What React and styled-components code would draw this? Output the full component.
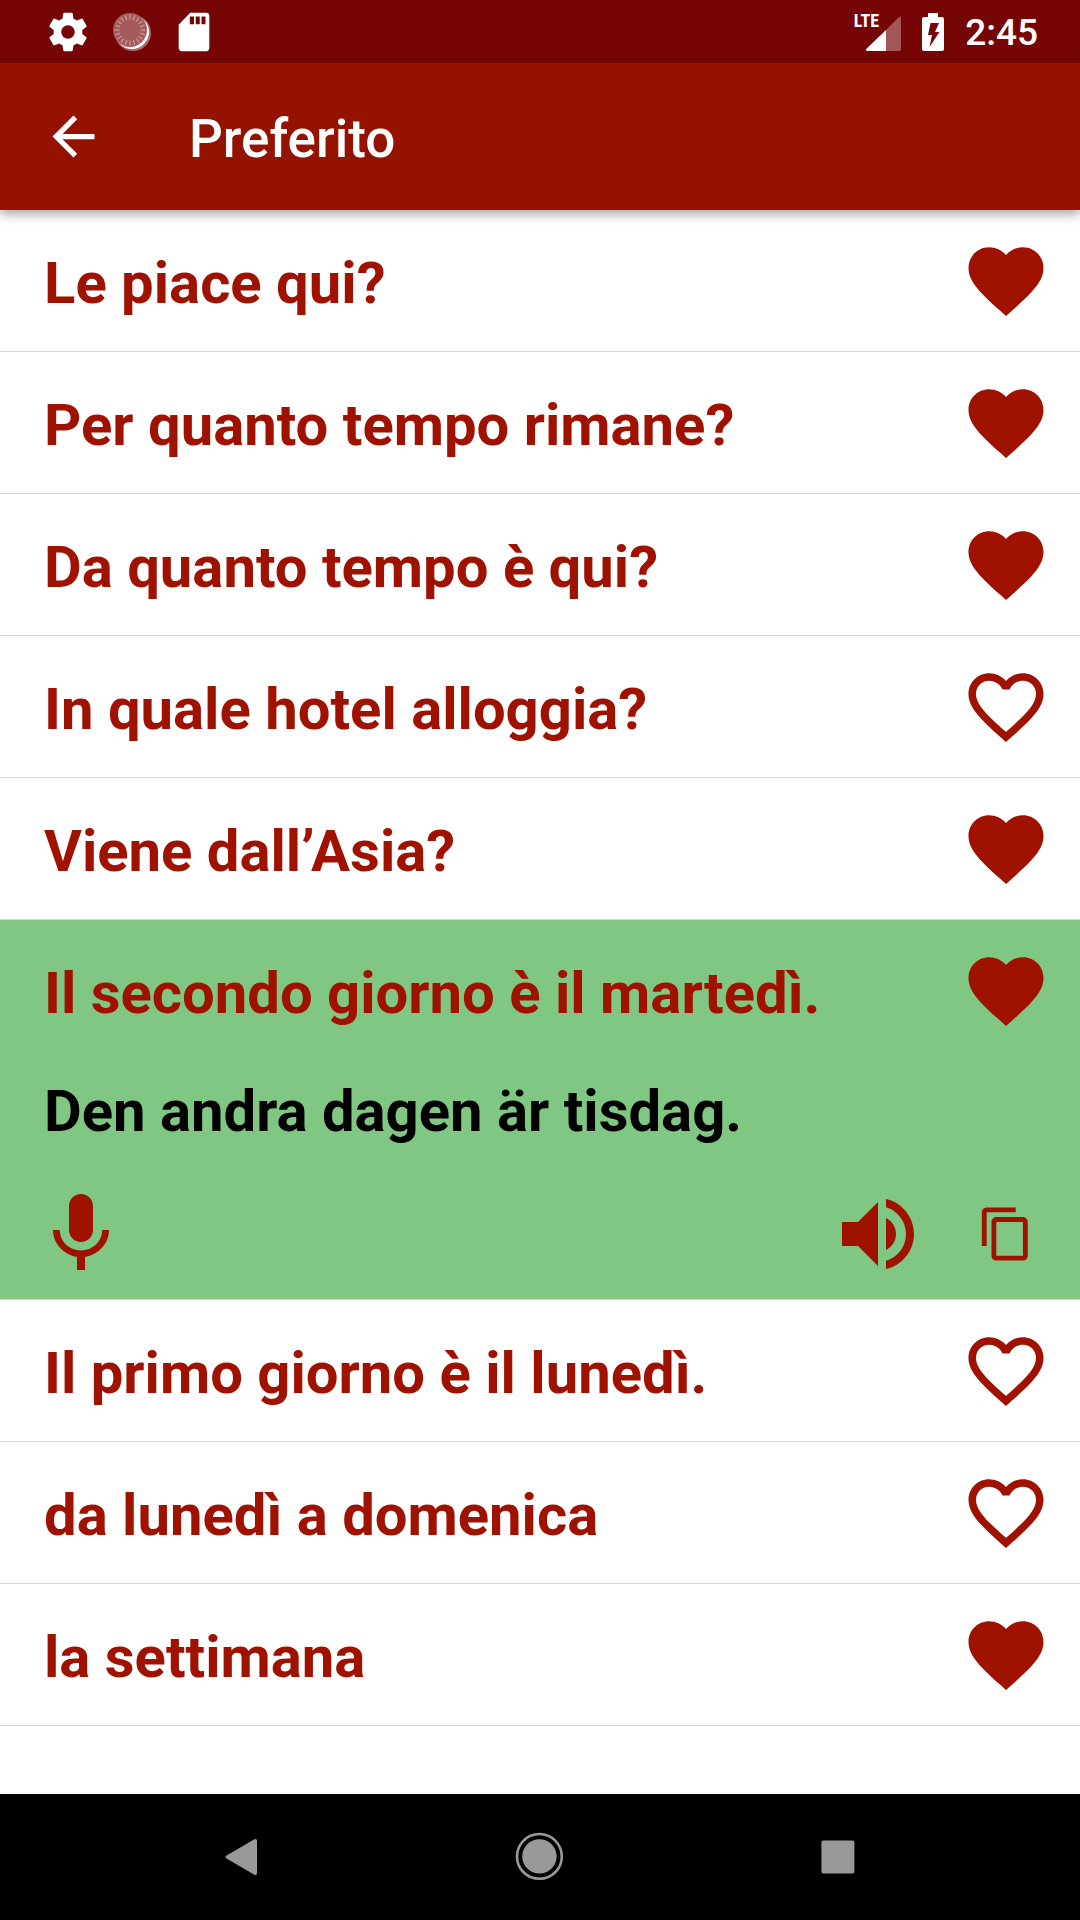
import React, { useState } from 'react'
import styled, { createGlobalStyle } from 'styled-components'

const GlobalStyle = createGlobalStyle`
  * {
    box-sizing: border-box;
  }
  body {
    margin: 0;
    background: #ffffff;
    font-family: Roboto, "Liberation Sans", sans-serif;
  }
`

const Screen = styled.div`
  display: flex;
  flex-direction: column;
  min-height: 100vh;
`

const StatusBar = styled.div`
  display: flex;
  align-items: center;
  justify-content: space-between;
  height: 63px;
  padding: 0 42px 0 45px;
  background: #760606;
  color: #ffffff;
`

const StatusGroup = styled.div`
  display: flex;
  align-items: center;
  gap: ${({ $gap }) => $gap}px;
`

const Network = styled.div`
  display: flex;
  align-items: flex-start;
  height: 38px;
`

const NetworkLabel = styled.span`
  font-size: 18px;
  font-weight: 700;
  line-height: 16px;
  margin-right: -14px;
  font-family: "Roboto Condensed", "Liberation Sans Narrow", "DejaVu Sans Condensed", sans-serif;
`

const Clock = styled.time`
  font-size: 37px;
  font-weight: 500;
  line-height: 44px;
  padding-top: 2px;
`

const AppBar = styled.header`
  position: relative;
  z-index: 1;
  display: flex;
  align-items: center;
  gap: 84px;
  height: 147px;
  padding: 0 42px;
  background: #931200;
  color: #ffffff;
  box-shadow: 0 4px 11px rgba(0, 0, 0, 0.36);
`

const Title = styled.h1`
  margin: 0;
  padding-top: 4px;
  font-size: 53px;
  font-weight: 500;
  line-height: 60px;
`

const IconButton = styled.button`
  display: flex;
  align-items: center;
  justify-content: center;
  width: ${({ $size }) => $size}px;
  height: ${({ $size }) => $size}px;
  padding: 0;
  border: 0;
  background: none;
  color: inherit;
  cursor: pointer;
`

const PhraseList = styled.ul`
  flex: 1;
  margin: 0;
  padding: 0;
  list-style: none;
  color: #a01200;
`

const PhraseItem = styled.li`
  border-bottom: 1px solid #d6d6d6;
  background: ${({ $open }) => ($open ? '#81c784' : '#ffffff')};
`

const PhraseHead = styled.div`
  display: flex;
  align-items: center;
  padding: 0 29px 0 44px;
`

const PhraseText = styled.button`
  flex: 1;
  padding: 39px 0 34px;
  border: 0;
  background: none;
  color: inherit;
  font-family: inherit;
  font-size: 58px;
  font-weight: 700;
  line-height: 68px;
  text-align: left;
  cursor: pointer;
`

const Translation = styled.p`
  margin: 0;
  padding: 16px 44px 41px;
  color: #000000;
  font-size: 58px;
  font-weight: 700;
  line-height: 68px;
`

const Actions = styled.div`
  display: flex;
  align-items: center;
  justify-content: space-between;
  padding: 0 29px 17px 33px;
`

const ActionGroup = styled.div`
  display: flex;
  align-items: center;
  gap: 35px;
`

const NavBar = styled.nav`
  display: grid;
  grid-template-columns: repeat(3, 1fr);
  justify-items: center;
  align-items: center;
  height: 126px;
  padding: 0 93px;
  background: #000000;
  color: #999999;
`

const Icon = ({ size, d }) => (
  <svg width={size} height={size} viewBox="0 0 24 24" fill="currentColor" aria-hidden="true">
    <path d={d} />
  </svg>
)

const paths = {
  settings: 'M19.43 12.98c.04-.32.07-.64.07-.98s-.03-.66-.07-.98l2.11-1.65c.19-.15.24-.42.12-.64l-2-3.46c-.12-.22-.39-.3-.61-.22l-2.49 1c-.52-.4-1.08-.73-1.69-.98l-.38-2.65C14.46 2.18 14.25 2 14 2h-4c-.25 0-.46.18-.49.42l-.38 2.65c-.61.25-1.17.59-1.69.98l-2.49-1c-.23-.09-.49 0-.61.22l-2 3.46c-.13.22-.07.49.12.64l2.11 1.65c-.04.32-.07.65-.07.98s.03.66.07.98l-2.11 1.65c-.19.15-.24.42-.12.64l2 3.46c.12.22.39.3.61.22l2.49-1c.52.4 1.08.73 1.69.98l.38 2.65c.03.24.24.42.49.42h4c.25 0 .46-.18.49-.42l.38-2.65c.61-.25 1.17-.59 1.69-.98l2.49 1c.23.09.49 0 .61-.22l2-3.46c.12-.22.07-.49-.12-.64l-2.11-1.65zM12 15.5c-1.93 0-3.5-1.57-3.5-3.5s1.57-3.5 3.5-3.5 3.5 1.57 3.5 3.5-1.57 3.5-3.5 3.5z',
  sdCard: 'M18.5 2H10L4 8.2V20.5c0 .83.67 1.5 1.5 1.5h13c.83 0 1.5-.67 1.5-1.5v-17c0-.83-.67-1.5-1.5-1.5zM12 8H9.8V3.9H12zm3 0h-2.1V3.9H15zm3 0h-2.1V3.9H18z',
  back: 'M20 11H7.83l5.59-5.59L12 4l-8 8 8 8 1.41-1.41L7.83 13H20v-2z',
  heart: 'M12 21.35l-1.45-1.32C5.4 15.36 2 12.28 2 8.5 2 5.42 4.42 3 7.5 3c1.74 0 3.41.81 4.5 2.09C13.09 3.81 14.76 3 16.5 3 19.58 3 22 5.42 22 8.5c0 3.78-3.4 6.86-8.55 11.54L12 21.35z',
  heartOutline: 'M16.5 3c-1.74 0-3.41.81-4.5 2.09C10.91 3.81 9.24 3 7.5 3 4.42 3 2 5.42 2 8.5c0 3.78 3.4 6.86 8.55 11.54L12 21.35l1.45-1.32C18.6 15.36 22 12.28 22 8.5 22 5.42 19.58 3 16.5 3zm-4.4 15.55l-.1.1-.1-.1C7.14 14.24 4 11.39 4 8.5 4 6.5 5.5 5 7.5 5c1.54 0 3.04.99 3.57 2.36h1.87C13.46 5.99 14.96 5 16.5 5c2 0 3.5 1.5 3.5 3.5 0 2.89-3.14 5.74-7.9 10.05z',
  mic: 'M12 14c1.66 0 2.99-1.34 2.99-3L15 5c0-1.66-1.34-3-3-3S9 3.34 9 5v6c0 1.66 1.34 3 3 3zm5.3-3c0 3-2.54 5.1-5.3 5.1S6.7 14 6.7 11H5c0 3.41 2.72 6.23 6 6.72V21h2v-3.28c3.28-.48 6-3.3 6-6.72h-1.7z',
  volume: 'M3 9v6h4l5 5V4L7 9H3zm13.5 3c0-1.77-1.02-3.29-2.5-4.03v8.05c1.48-.73 2.5-2.25 2.5-4.02zM14 3.23v2.06c2.89.86 5 3.54 5 6.71s-2.11 5.85-5 6.71v2.06c4.01-.91 7-4.49 7-8.77s-2.99-7.86-7-8.77z',
  copy: 'M16 1H4c-1.1 0-2 .9-2 2v14h2V3h12V1zm3 4H8c-1.1 0-2 .9-2 2v14c0 1.1.9 2 2 2h11c1.1 0 2-.9 2-2V7c0-1.1-.9-2-2-2zm0 16H8V7h11v14z'
}

const ticks = Array.from({ length: 20 }, (_, i) => i * 18)

const SyncIcon = () => (
  <svg width="46" height="46" viewBox="0 0 46 46" aria-hidden="true">
    <circle cx="25" cy="24" r="18" fill="#ffffff" opacity="0.4" />
    <circle cx="24" cy="23" r="17" fill="#ffffff" />
    <circle cx="22" cy="21" r="17" fill="#a55a5c" />
    {ticks.map((angle) => (
      <path key={angle} d="M22 5.5v5" stroke="#cfa4a5" strokeWidth="1" transform={`rotate(${angle} 22 21)`} />
    ))}
  </svg>
)

const SignalIcon = () => (
  <svg width="36" height="38" viewBox="0 0 36 38" fill="#ffffff" aria-hidden="true">
    <path d="M21 17v21H2q-2-.5-.8-2z" />
    <path d="M21 17L34 4q2-1 2 1v31q0 2-2 2H21z" opacity="0.32" />
  </svg>
)

const BatteryIcon = () => (
  <svg width="22" height="38" viewBox="0 0 22 38" fill="#ffffff" aria-hidden="true">
    <path
      fillRule="evenodd"
      d="M6 0h10v4h4q2 0 2 2v30q0 2-2 2H2q-2 0-2-2V6q0-2 2-2h4zM8.5 10L6 22h4L7.5 34 17.5 19H13l4-9z"
    />
  </svg>
)

const phrases = [
  { id: 1, text: 'Le piace qui?', favorite: true },
  { id: 2, text: 'Per quanto tempo rimane?', favorite: true },
  { id: 3, text: 'Da quanto tempo è qui?', favorite: true },
  { id: 4, text: 'In quale hotel alloggia?', favorite: false },
  { id: 5, text: 'Viene dall’Asia?', favorite: true },
  { id: 6, text: 'Il secondo giorno è il martedì.', translation: 'Den andra dagen är tisdag.', favorite: true },
  { id: 7, text: 'Il primo giorno è il lunedì.', favorite: false },
  { id: 8, text: 'da lunedì a domenica', favorite: false },
  { id: 9, text: 'la settimana', favorite: true }
]

const Phrase = ({ item, open, onToggle, onFavorite }) => {
  const expanded = open && !!item.translation

  return <PhraseItem $open={expanded}>
    <PhraseHead>
      <PhraseText type="button" aria-expanded={expanded} onClick={() => onToggle(item.id)}>{item.text}</PhraseText>
      <IconButton
        type="button"
        $size={90}
        aria-label="Preferito"
        aria-pressed={item.favorite}
        onClick={() => onFavorite(item.id)}
      >
        <Icon size={90} d={item.favorite ? paths.heart : paths.heartOutline} />
      </IconButton>
    </PhraseHead>
    {expanded && <>
      <Translation lang="sv">{item.translation}</Translation>
      <Actions>
        <IconButton type="button" $size={96} aria-label="Registra"><Icon size={96} d={paths.mic} /></IconButton>
        <ActionGroup>
          <IconButton type="button" $size={96} aria-label="Ascolta"><Icon size={96} d={paths.volume} /></IconButton>
          <IconButton type="button" $size={90} aria-label="Copia"><Icon size={58} d={paths.copy} /></IconButton>
        </ActionGroup>
      </Actions>
    </>}
  </PhraseItem>
}

const App = () => {
  const [items, setItems] = useState(phrases)
  const [openId, setOpenId] = useState(6)

  const onToggle = (id) => setOpenId(openId === id ? null : id)

  const onFavorite = (id) => {
    setItems(items.map((item) => (item.id === id ? { ...item, favorite: !item.favorite } : item)))
  }

  return <Screen lang="it">
    <GlobalStyle />
    <StatusBar>
      <StatusGroup $gap={17}>
        <Icon size={46} d={paths.settings} />
        <SyncIcon />
        <Icon size={46} d={paths.sdCard} />
      </StatusGroup>
      <StatusGroup $gap={21}>
        <Network>
          <NetworkLabel>LTE</NetworkLabel>
          <SignalIcon />
        </Network>
        <BatteryIcon />
        <Clock>2:45</Clock>
      </StatusGroup>
    </StatusBar>
    <AppBar>
      <IconButton type="button" $size={63} aria-label="Indietro"><Icon size={63} d={paths.back} /></IconButton>
      <Title>Preferito</Title>
    </AppBar>
    <PhraseList>
      {items.map((item) => (
        <Phrase key={item.id} item={item} open={openId === item.id} onToggle={onToggle} onFavorite={onFavorite} />
      ))}
    </PhraseList>
    <NavBar>
      <IconButton type="button" $size={63} aria-label="Indietro">
        <svg width="48" height="48" viewBox="0 0 48 48" fill="currentColor" aria-hidden="true">
          <path d="M8.5 22.500L36 6.500q3-1.500 3 1.500v32q0 3-3 1.500L8.500 25.500q-2-1.500 0-3z" />
        </svg>
      </IconButton>
      <IconButton type="button" $size={63} aria-label="Home">
        <svg width="48" height="48" viewBox="0 0 48 48" fill="currentColor" overflow="visible" aria-hidden="true">
          <circle cx="23.4" cy="23.4" r="22.4" fill="none" stroke="currentColor" strokeWidth="2.6" />
          <circle cx="23.4" cy="23.4" r="17.2" />
        </svg>
      </IconButton>
      <IconButton type="button" $size={63} aria-label="Recenti">
        <svg width="48" height="48" viewBox="0 0 48 48" fill="currentColor" aria-hidden="true">
          <rect x="7.4" y="7.4" width="33" height="33" rx="2" />
        </svg>
      </IconButton>
    </NavBar>
  </Screen>
}

export default App
